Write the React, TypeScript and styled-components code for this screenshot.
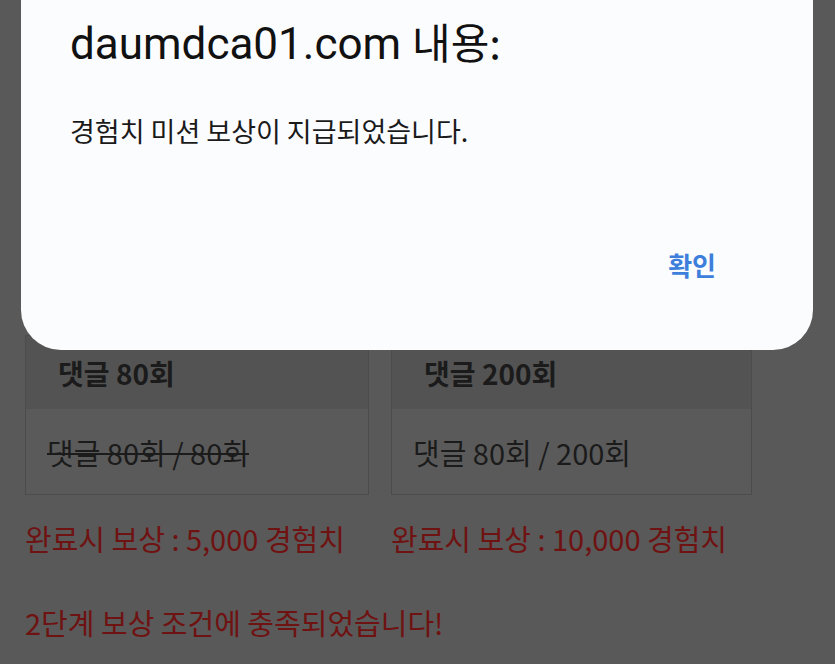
import styled, { createGlobalStyle } from "styled-components";

const GlobalStyle = createGlobalStyle`
    html, body {
        margin: 0;
        padding: 0;
        background: #595959;
    }
    #root {
        min-height: 664px;
    }
`;

const missions = [
    { title: "댓글 80회", progress: "댓글 80회 / 80회", reward: "완료시 보상 : 5,000 경험치", done: true },
    { title: "댓글 200회", progress: "댓글 80회 / 200회", reward: "완료시 보상 : 10,000 경험치", done: false },
];

function App() {
    return (
        <>
            <GlobalStyle />
            <Page>
                <MissionGrid>
                    {missions.map((m) => (
                        <Card key={m.title}>
                            <CardHead>{m.title}</CardHead>
                            <CardBody done={m.done}>{m.progress}</CardBody>
                        </Card>
                    ))}
                    {missions.map((m) => (
                        <Reward key={m.reward}>{m.reward}</Reward>
                    ))}
                </MissionGrid>
                <Notice>2단계 보상 조건에 충족되었습니다!</Notice>
            </Page>
            <Dialog>
                <DialogTitle>
                    daumdca01.com <TitleKo>내용:</TitleKo>
                </DialogTitle>
                <DialogMessage>경험치 미션 보상이 지급되었습니다.</DialogMessage>
                <DialogActions>
                    <OkButton>확인</OkButton>
                </DialogActions>
            </Dialog>
        </>
    );
}

export default App;

const Page = styled.div`
    padding: 335px 0 0 25px;
    font-family: "Noto Sans CJK KR", "Noto Sans", sans-serif;
    color: #1b1b1b;
`;

const MissionGrid = styled.div`
    display: grid;
    grid-template-columns: 344px 361px;
    column-gap: 22px;
`;

const Card = styled.div`
    display: flex;
    flex-direction: column;
    border: 1px solid #4c4c4c;
`;

const CardHead = styled.div`
    height: 73px;
    display: flex;
    align-items: center;
    padding: 0 0 0 32px;
    background: #535353;
    font-size: 28px;
    font-weight: 700;
`;

const CardBody = styled.div<{ done?: boolean }>`
    height: 85px;
    display: flex;
    align-items: center;
    padding: 0 0 0 21px;
    background: #5a5a5a;
    font-size: 29px;
    text-decoration: ${(p) => (p.done ? "line-through" : "none")};
    text-decoration-thickness: 2px;
`;

const Reward = styled.div`
    margin-top: 25px;
    height: 36px;
    line-height: 36px;
    font-size: 29px;
    color: #6f1212;
    white-space: nowrap;
`;

const Notice = styled.div`
    margin-top: 48px;
    height: 36px;
    line-height: 36px;
    font-size: 29px;
    color: #6f1212;
`;

const Dialog = styled.div`
    position: absolute;
    top: -40px;
    left: 21px;
    width: 792px;
    height: 390px;
    box-sizing: border-box;
    padding: 55px 49px 0 49px;
    background: #fbfcfe;
    border-radius: 40px;
    display: flex;
    flex-direction: column;
`;

const DialogTitle = styled.div`
    font-family: Roboto, "Noto Sans CJK KR", sans-serif;
    font-size: 44px;
    line-height: 52px;
    color: #111;
`;

const TitleKo = styled.span`
    font-family: "Noto Sans CJK KR", sans-serif;
    font-size: 42px;
`;

const DialogMessage = styled.div`
    margin-top: 44px;
    font-family: "Noto Sans CJK KR", sans-serif;
    font-size: 27px;
    line-height: 34px;
    color: #1a1a1a;
`;

const DialogActions = styled.div`
    display: flex;
    justify-content: flex-end;
    margin-top: 100px;
    padding-right: 48px;
`;

const OkButton = styled.button`
    border: none;
    background: none;
    padding: 0;
    font-family: "Noto Sans CJK KR", sans-serif;
    font-size: 26px;
    font-weight: 700;
    line-height: 34px;
    color: #3d7fdb;
    cursor: pointer;
`;
